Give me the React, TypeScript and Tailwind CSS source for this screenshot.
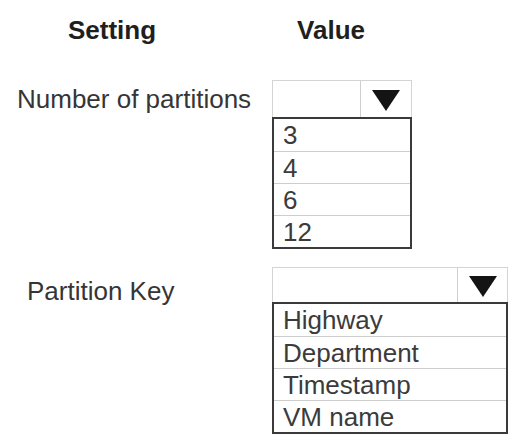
const font = "font-['Liberation_Sans',Arial,sans-serif]";

function Arrow() {
  return (
    <svg width="28" height="21" viewBox="0 0 28 21">
      <polygon points="0,0 28,0 14,21" fill="#141414" />
    </svg>
  );
}

function Dropdown({
  width,
  mainWidth,
  boxHeight,
  options,
}: {
  width: number;
  mainWidth: number;
  boxHeight: number;
  options: string[];
}) {
  return (
    <div style={{ width }} className="flex flex-col">
      <div
        style={{ height: boxHeight }}
        className="flex border border-b-0 border-[#d4d4d4]"
      >
        <div style={{ width: mainWidth }} className="h-full" />
        <div className="flex flex-1 items-center justify-center border-l border-[#cfcfcf] pt-[3px]">
          <Arrow />
        </div>
      </div>
      <div className="flex flex-col border-2 border-[#3a3a3a] bg-white">
        {options.map((o, i) => (
          <div
            key={o}
            className={`h-[32px] pl-[9px] text-[26px] leading-[32px] text-[#3b3b3b] ${
              i > 0 ? "border-t border-[#cdcdcd]" : ""
            }`}
          >
            {o}
          </div>
        ))}
      </div>
    </div>
  );
}

export default function App() {
  return (
    <div className={`w-[512px] h-[438px] overflow-hidden bg-white ${font}`}>
      {/* Headers */}
      <div className="flex pt-[15px] text-[26px] leading-[30px] font-bold text-[#1f1f1f]">
        <span className="ml-[68px]">Setting</span>
        <span className="ml-[141px]">Value</span>
      </div>

      {/* Number of partitions */}
      <div className="mt-[35px] flex">
        <div className="w-[272px] h-[37px] flex items-center pl-[17px] text-[26px] leading-[30px] text-[#353535]">
          Number of partitions
        </div>
        <Dropdown width={140} mainWidth={87} boxHeight={37} options={["3", "4", "6", "12"]} />
      </div>

      {/* Partition Key */}
      <div className="mt-[18px] flex">
        <div className="w-[272px] pt-[9px] pl-[27px] text-[26px] leading-[30px] text-[#353535]">
          Partition Key
        </div>
        <Dropdown
          width={236}
          mainWidth={184}
          boxHeight={35}
          options={["Highway", "Department", "Timestamp", "VM name"]}
        />
      </div>
    </div>
  );
}
